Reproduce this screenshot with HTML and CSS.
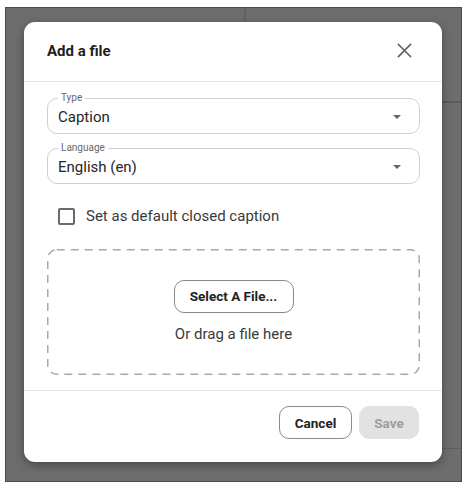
FILE: index.html
```html
<!DOCTYPE html>
<html lang="en">
<head>
<meta charset="utf-8">
<title>Add a file</title>
<link rel="stylesheet" href="styles.css">
</head>
<body>
<div class="screen">
  <div class="dialog" role="dialog" aria-labelledby="dlg-title">
    <header class="dialog-header">
      <h2 id="dlg-title" class="dialog-title">Add a file</h2>
      <button class="close-btn" aria-label="Close">
        <svg width="15" height="15" viewBox="0 0 15 15" aria-hidden="true">
          <path d="M1.5 1.5L13.5 13.5M13.5 1.5L1.5 13.5" stroke="#5f5f5f" stroke-width="1.6" fill="none" stroke-linecap="square"/>
        </svg>
      </button>
    </header>
    <div class="dialog-body">
      <fieldset class="field">
        <legend class="field-label">Type</legend>
        <div class="field-row">
          <span class="field-value">Caption</span>
          <span class="caret"></span>
        </div>
      </fieldset>
      <fieldset class="field">
        <legend class="field-label">Language</legend>
        <div class="field-row">
          <span class="field-value">English (en)</span>
          <span class="caret"></span>
        </div>
      </fieldset>
      <label class="check-row">
        <span class="checkbox"></span>
        <span class="check-text">Set as default closed caption</span>
      </label>
      <div class="dropzone">
        <svg class="dash-frame" aria-hidden="true">
          <rect x="0.75" y="0.75" width="371.5" height="124.5" rx="9" ry="9" fill="none" stroke="#a9a9a9" stroke-width="1.5" stroke-dasharray="8 6"/>
        </svg>
        <button class="btn btn-outline select-btn">Select A File...</button>
        <div class="drop-text">Or drag a file here</div>
      </div>
    </div>
    <footer class="dialog-footer">
      <button class="btn btn-outline">Cancel</button>
      <button class="btn btn-disabled" disabled>Save</button>
    </footer>
  </div>
</div>
</body>
</html>
```

FILE: styles.css
```css
* { box-sizing: border-box; }

html, body {
  margin: 0;
  padding: 0;
  background: #ffffff;
  font-family: Roboto, "Noto Sans", Arial, sans-serif;
}

.screen {
  width: 457px;
  height: 475px;
  margin: 7px 0 0 5px;
  border: 1px solid #4c4c4c;
  background-color: #6d6d6d;
  background-image:
    linear-gradient(to right, transparent 238px, #626262 238px, #626262 240px, transparent 240px),
    linear-gradient(to bottom, transparent 93px, #5a5a5a 93px, #5a5a5a 95px, transparent 95px),
    linear-gradient(to bottom, transparent 440px, #5e5e5e 440px, #5e5e5e 441px, transparent 441px);
  background-size: 100% 16px, 100% 100%, 100% 100%;
  background-position: 0 0, 436px 0, 436px 0;
  background-repeat: no-repeat;
  padding: 14px 0 0 18px;
}

.dialog {
  width: 418px;
  height: 440px;
  background: #ffffff;
  border-radius: 11px;
  box-shadow: 0 3px 10px rgba(0, 0, 0, 0.35);
  display: flex;
  flex-direction: column;
}

.dialog-header {
  height: 60px;
  border-bottom: 1px solid #e6e6e6;
  display: flex;
  align-items: center;
  justify-content: space-between;
  padding: 0 27px 2px 23px;
}

.dialog-title {
  margin: 0;
  font-size: 15px;
  font-weight: 700;
  color: #1f1f1f;
}

.close-btn {
  border: 0;
  background: none;
  padding: 0;
  width: 22px;
  height: 22px;
  display: flex;
  align-items: center;
  justify-content: center;
  cursor: pointer;
}

.dialog-body {
  padding: 11px 22px 15px 23px;
  display: flex;
  flex-direction: column;
  border-bottom: 1px solid #e6e6e6;
}

.field {
  margin: 0 0 9px 0;
  padding: 0 17px 0 10px;
  border: 1px solid #cfcfcf;
  border-radius: 10px;
  height: 41px;
  min-width: 0;
}

.field-label {
  font-size: 10px;
  color: #6a6a6a;
  padding: 0 3px;
  margin-left: 0;
  line-height: 10px;
}

.field-row {
  display: flex;
  align-items: center;
  justify-content: space-between;
  height: 28px;
  margin-top: 0;
}

.field-value {
  font-size: 15px;
  color: #262626;
}

.caret {
  width: 0;
  height: 0;
  border-left: 4.5px solid transparent;
  border-right: 4.5px solid transparent;
  border-top: 4.5px solid #666666;
  margin-right: 1px;
}

.check-row {
  display: flex;
  align-items: center;
  gap: 11px;
  padding: 10px 0 0 11px;
  height: 36px;
  cursor: pointer;
}

.checkbox {
  width: 17px;
  height: 17px;
  border: 2px solid #6a6a6a;
  border-radius: 2px;
}

.check-text {
  font-size: 15px;
  color: #3a3a3a;
}

.dropzone {
  position: relative;
  margin-top: 20px;
  height: 126px;
  display: flex;
  flex-direction: column;
  align-items: center;
  justify-content: center;
  gap: 12px;
  padding-bottom: 2px;
}

.dash-frame {
  position: absolute;
  left: 0;
  top: 0;
  width: 373px;
  height: 126px;
}

.btn {
  font-family: Roboto, "Noto Sans", Arial, sans-serif;
  font-size: 13.5px;
  font-weight: 700;
  height: 33px;
  border-radius: 10px;
  padding: 0 14px;
  cursor: pointer;
}

.btn-outline {
  background: #ffffff;
  color: #222222;
  border: 1px solid #8a8a8a;
}

.select-btn {
  position: relative;
  width: 120px;
  padding: 0;
}

.drop-text {
  position: relative;
  font-size: 15px;
  color: #3a3a3a;
}

.dialog-footer {
  flex: 1;
  display: flex;
  justify-content: flex-end;
  align-items: flex-start;
  gap: 7px;
  padding: 15px 23px 0 0;
}

.btn-disabled {
  background: #e2e2e2;
  color: #9d9d9d;
  border: 1px solid #e2e2e2;
  width: 60px;
  padding: 0;
  cursor: default;
}

.dialog-footer .btn-outline {
  width: 73px;
  padding: 0;
}
```
